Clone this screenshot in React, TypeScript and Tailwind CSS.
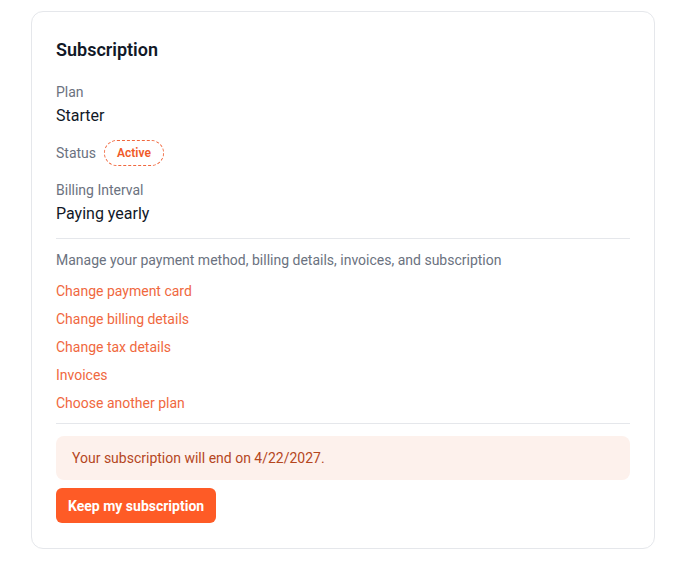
import React from "react";

const links = [
  "Change payment card",
  "Change billing details",
  "Change tax details",
  "Invoices",
  "Choose another plan",
];

export default function App() {
  return (
    <div className="min-h-screen bg-white pt-[11px] pl-[31px] font-['Roboto',sans-serif]">
      <div className="w-[624px] rounded-xl border border-[#e5e7eb] bg-white px-6 pt-6 pb-[25px]">
        <h2 className="text-lg leading-7 font-semibold text-[#111827]">Subscription</h2>

        <div className="mt-[18px]">
          <div className="text-sm leading-5 text-[#6b7280]">Plan</div>
          <div className="mt-[2px] text-base leading-6 text-[#111827]">Starter</div>
        </div>

        <div className="mt-3 flex items-center gap-2">
          <span className="text-sm leading-5 text-[#6b7280]">Status</span>
          <span className="inline-flex h-[26px] items-center rounded-full border border-dashed border-[#f0683e] px-3 text-xs font-semibold text-[#f05a28]">
            Active
          </span>
        </div>

        <div className="mt-[14px]">
          <div className="text-sm leading-5 text-[#6b7280]">Billing Interval</div>
          <div className="mt-[2px] text-base leading-6 text-[#111827]">Paying yearly</div>
        </div>

        <hr className="mt-3 border-[#e5e7eb]" />

        <p className="mt-[11px] text-sm leading-5 text-[#6b7280]">
          Manage your payment method, billing details, invoices, and subscription
        </p>
        <div className="mt-[11px] flex flex-col gap-2">
          {links.map((l) => (
            <a key={l} href="#" className="text-sm leading-5 text-[#f0683e]">
              {l}
            </a>
          ))}
        </div>

        <hr className="mt-[10px] border-[#e5e7eb]" />

        <div className="mt-3 flex h-[44px] items-center rounded-lg bg-[#fdf1ec] px-4 text-sm text-[#b5471e]">
          Your subscription will end on 4/22/2027.
        </div>

        <button className="mt-2 h-[35px] rounded-md bg-[#fe5b26] px-3 text-sm font-bold text-white">
          Keep my subscription
        </button>
      </div>
    </div>
  );
}
